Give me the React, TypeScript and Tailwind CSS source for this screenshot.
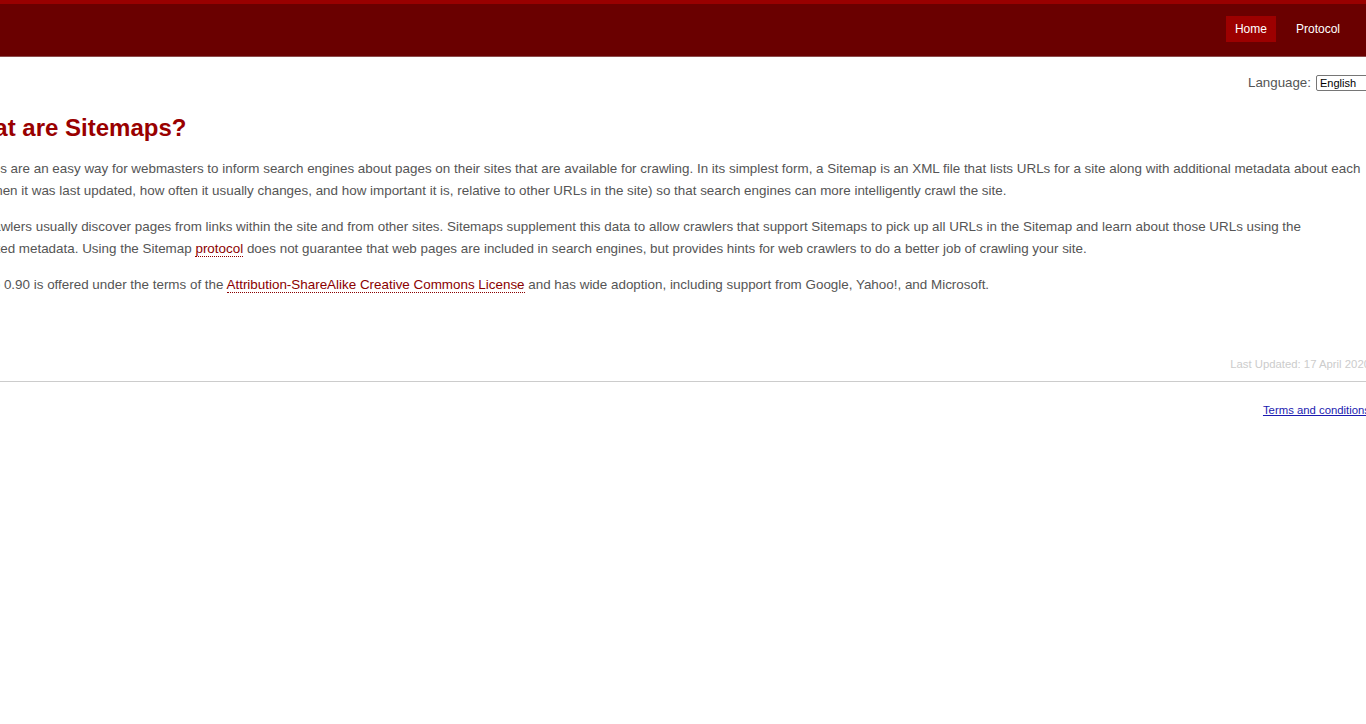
export default function App() {
  return (
    <div className="w-[1366px] min-h-[724px] overflow-hidden bg-white font-['Liberation_Sans',Arial,sans-serif] text-[#555]">
      <header className="h-[57px] bg-[#6a0000] border-t-4 border-[#990000] border-b border-b-[#8c4c4c]">
        <div className="ml-[-49px] w-[1419px] h-full flex items-center justify-end pr-[20px]">
          <nav className="flex items-center gap-[10px] text-[12px] text-white mt-[-2px]">
            <a className="h-[26px] px-[9px] flex items-center bg-[#9c0000]">Home</a>
            <a className="h-[26px] px-[10px] flex items-center">Protocol</a>
          </nav>
        </div>
      </header>

      <main className="ml-[-49px] w-[1419px]">
        <div className="flex justify-end items-center pt-[16px] h-[36px] text-[13.33px] text-[#555]">
          <span>Language:</span>
          <select className="ml-[5px] mr-[-16px] w-[70px] h-[16px] border border-[#767676] rounded-[2px] text-[11px] leading-[14px] text-black px-[3px] bg-white appearance-none">
            <option>English</option>
          </select>
        </div>

        <h1 className="mt-[19px] ml-[6px] text-[24px] leading-[32px] font-bold text-[#990000]">What are Sitemaps?</h1>

        <div className="mt-[14px] pr-[4px] text-[13.42px] leading-[22px]">
          <p className="mb-[14px]">
            Sitemaps are an easy way for webmasters to inform search engines about pages on their sites that are available for crawling. In its simplest form, a Sitemap is an XML file that lists URLs for a site along with additional metadata about each URL (when it was last updated, how often it usually changes, and how important it is, relative to other URLs in the site) so that search engines can more intelligently crawl the site.
          </p>
          <p className="mb-[14px]">
            Web crawlers usually discover pages from links within the site and from other sites. Sitemaps supplement this data to allow crawlers that support Sitemaps to pick up all URLs in the Sitemap and learn about those URLs using the associated metadata. Using the Sitemap{" "}
            <a className="text-[#8b0000] border-b border-dotted border-[#8b0000]">protocol</a> does not guarantee that web pages are included in search engines, but provides hints for web crawlers to do a better job of crawling your site.
          </p>
          <p>
            Sitemap 0.90 is offered under the terms of the{" "}
            <a className="text-[#8b0000] border-b border-dotted border-[#8b0000]">Attribution-ShareAlike Creative Commons License</a> and has wide adoption, including support from Google, Yahoo!, and Microsoft.
          </p>
        </div>

        <div className="mt-[61px] text-right text-[11.33px] leading-[14px] text-[#ccc]">Last Updated: 17 April 2020</div>
      </main>

      <div className="mt-[10px] border-t border-[#ccc]" />

      <div className="ml-[-49px] w-[1419px] mt-[21px] text-right text-[11.33px] leading-[14px]">
        <a className="text-[#1a1ab0] underline">Terms and conditions</a>
      </div>
    </div>
  );
}
